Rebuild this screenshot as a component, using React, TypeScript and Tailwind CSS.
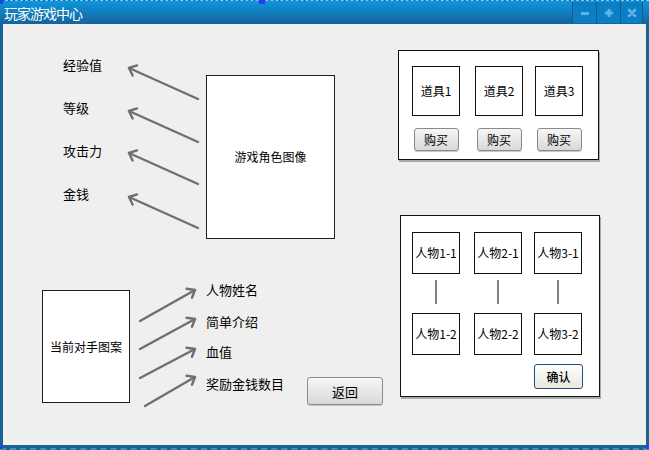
import React from "react";

const Arrow = ({ x1, y1, x2, y2, a1, a2 }: { x1: number; y1: number; x2: number; y2: number; a1: [number, number]; a2: [number, number] }) => (
  <g stroke="#6f6f6f" strokeWidth={2.4} strokeLinecap="round" fill="none">
    <line x1={x1} y1={y1} x2={x2} y2={y2} />
    <polyline points={`${x2 + a1[0]},${y2 + a1[1]} ${x2},${y2} ${x2 + a2[0]},${y2 + a2[1]}`} strokeLinejoin="round" />
  </g>
);

const GrayBtn = ({ label, cls }: { label: string; cls: string }) => (
  <div
    className={`${cls} flex items-center justify-center rounded-[3px] border border-[#8a8a8a] bg-gradient-to-b from-[#f6f6f6] to-[#d9d9d9] text-[12px] leading-none text-black shadow-[0_1px_0_#c8c8c8]`}
  >
    {label}
  </div>
);

export default function App() {
  const topLeftA1: [number, number] = [8, -2.6];
  const topLeftA2: [number, number] = [3.6, 7.6];
  const botA1: [number, number] = [-8.4, -1.2];
  const botA2: [number, number] = [-3, 7.8];
  return (
    <div className="relative flex h-[450px] w-[649px] flex-col overflow-hidden bg-[#156494] font-['Noto_Sans_CJK_SC','Noto_Sans',sans-serif] text-black">
      {/* title bar */}
      <div className="flex h-[24px] shrink-0 items-start border-t border-dashed border-t-[#8fc4ea] bg-gradient-to-b from-[#0a97e0] to-[#15639b]">
        <span className="ml-[4px] mt-[5px] text-[14px] leading-[14px] tracking-[-1px] text-white">玩家游戏中心</span>
        <div className="ml-auto mr-[6px] mt-[1px] flex h-[21px]">
          <div className="flex w-[24px] items-center justify-center border-l border-[#0b5d92] bg-[#0c7fc4]">
            <svg width="10" height="10" viewBox="0 0 10 10">
              <rect x="1" y="4" width="8" height="3" rx="0.5" fill="#5db3e6" />
            </svg>
          </div>
          <div className="flex w-[24px] items-center justify-center border-l border-[#0b5d92] bg-[#0c7fc4]">
            <svg width="10" height="10" viewBox="0 0 10 10">
              <rect x="1" y="3.5" width="8" height="3" rx="0.5" fill="#5db3e6" />
              <rect x="3.5" y="1" width="3" height="8" rx="0.5" fill="#5db3e6" />
            </svg>
          </div>
          <div className="flex w-[23px] items-center justify-center border-x border-[#0b5d92] bg-[#0c7fc4]">
            <svg width="10" height="10" viewBox="0 0 10 10">
              <path d="M2 2 L8 8 M8 2 L2 8" stroke="#5db3e6" strokeWidth="2.6" strokeLinecap="round" />
            </svg>
          </div>
        </div>
      </div>

      {/* body */}
      <div className="mx-[3px] mb-[5px] flex flex-1 bg-[#efefef]">
        {/* left column */}
        <div className="flex w-[395px] shrink-0 flex-col">
          {/* top group */}
          <div className="mt-[33px] flex items-start">
            <div className="ml-[60px] flex w-[60px] shrink-0 flex-col gap-[27px] text-[13px] leading-4">
              <div>经验值</div>
              <div>等级</div>
              <div>攻击力</div>
              <div>金钱</div>
            </div>
            <svg width="80" height="180" className="shrink-0">
              <Arrow x1={75} y1={42} x2={6} y2={11} a1={topLeftA1} a2={topLeftA2} />
              <Arrow x1={75} y1={85} x2={6} y2={54} a1={topLeftA1} a2={topLeftA2} />
              <Arrow x1={75} y1={127} x2={6} y2={96} a1={topLeftA1} a2={topLeftA2} />
              <Arrow x1={75} y1={171} x2={6} y2={140} a1={topLeftA1} a2={topLeftA2} />
            </svg>
            <div className="ml-[3px] mt-[18px] flex h-[164px] w-[129px] shrink-0 items-center justify-center border border-[#1e1e1e] bg-white text-[12px]">
              游戏角色图像
            </div>
          </div>

          {/* bottom group */}
          <div className="mt-[43px] flex items-start">
            <div className="ml-[39px] mt-[8px] flex h-[113px] w-[88px] shrink-0 items-center justify-center border border-[#1e1e1e] bg-white text-[12px]">
              当前对手图案
            </div>
            <svg width="76" height="130" className="shrink-0">
              <Arrow x1={10} y1={39} x2={65} y2={8} a1={botA1} a2={botA2} />
              <Arrow x1={10} y1={67} x2={65} y2={37} a1={botA1} a2={botA2} />
              <Arrow x1={10} y1={96} x2={65} y2={67} a1={botA1} a2={botA2} />
              <Arrow x1={15} y1={124} x2={65} y2={95} a1={botA1} a2={botA2} />
            </svg>
            <div className="flex w-[101px] shrink-0 flex-col text-[13px] leading-4">
              <div>人物姓名</div>
              <div className="mt-[16px]">简单介绍</div>
              <div className="mt-[14px]">血值</div>
              <div className="mt-[16px]">奖励金钱数目</div>
            </div>
            <GrayBtn label="返回" cls="mt-[95px] h-[28px] w-[76px] shrink-0 text-[13px]" />
          </div>
        </div>

        {/* right column */}
        <div className="flex flex-col">
          <div className="mt-[26px] flex h-[110px] w-[201px] items-start border border-[#111] bg-white pt-[15px] shadow-[1px_2px_0_#aaaaaa]">
            {[
              { n: "道具1", ml: "ml-[13px]" },
              { n: "道具2", ml: "ml-[15px]" },
              { n: "道具3", ml: "ml-[12px]" },
            ].map((it) => (
              <div key={it.n} className={`${it.ml} flex w-[48px] flex-col items-center`}>
                <div className="flex h-[50px] w-[48px] items-center justify-center border border-[#111] bg-white text-[12px]">
                  {it.n}
                </div>
                <GrayBtn label="购买" cls="mt-[12px] h-[23px] w-[45px]" />
              </div>
            ))}
          </div>

          <div className="ml-[2px] mt-[55px] flex h-[182px] w-[200px] flex-col border border-[#111] bg-white pt-[16px] shadow-[1px_2px_0_#aaaaaa]">
            <div className="flex items-start">
              {[
                { a: "人物1-1", b: "人物1-2", ml: "ml-[11px]" },
                { a: "人物2-1", b: "人物2-2", ml: "ml-[14px]" },
                { a: "人物3-1", b: "人物3-2", ml: "ml-[12px]" },
              ].map((c) => (
                <div key={c.a} className={`${c.ml} flex w-[48px] flex-col items-center`}>
                  <div className="flex h-[42px] w-[48px] items-center justify-center border border-[#111] bg-white text-[12px]">
                    {c.a}
                  </div>
                  <div className="mt-[6px] h-[24px] w-[2px] bg-[#808080]" />
                  <div className="mt-[9px] flex h-[42px] w-[48px] items-center justify-center border border-[#111] bg-white text-[12px]">
                    {c.b}
                  </div>
                </div>
              ))}
            </div>
            <div className="mt-[9px] flex justify-end pr-[16px]">
              <div className="flex h-[25px] w-[49px] items-center justify-center rounded-[3px] border border-[#1f4f80] bg-gradient-to-b from-[#ffffff] to-[#e9e7de] text-[12px] font-medium leading-none">
                确认
              </div>
            </div>
          </div>
        </div>
      </div>

      {/* bottom dashed selection line and handles */}
      <div className="absolute bottom-0 left-0 h-[2px] w-full border-b-2 border-dashed border-[#4f86b8]" />
      <div className="absolute left-0 top-0 h-[4px] w-[3px] bg-[#2a3cf0]" />
      <div className="absolute left-[259px] top-0 h-[4px] w-[6px] bg-[#2a3cf0]" />
      <div className="absolute bottom-[1px] left-0 h-[4px] w-[3px] bg-[#2a3cf0]" />
      <div className="absolute bottom-[1px] right-0 h-[4px] w-[3px] bg-[#2a3cf0]" />
    </div>
  );
}
